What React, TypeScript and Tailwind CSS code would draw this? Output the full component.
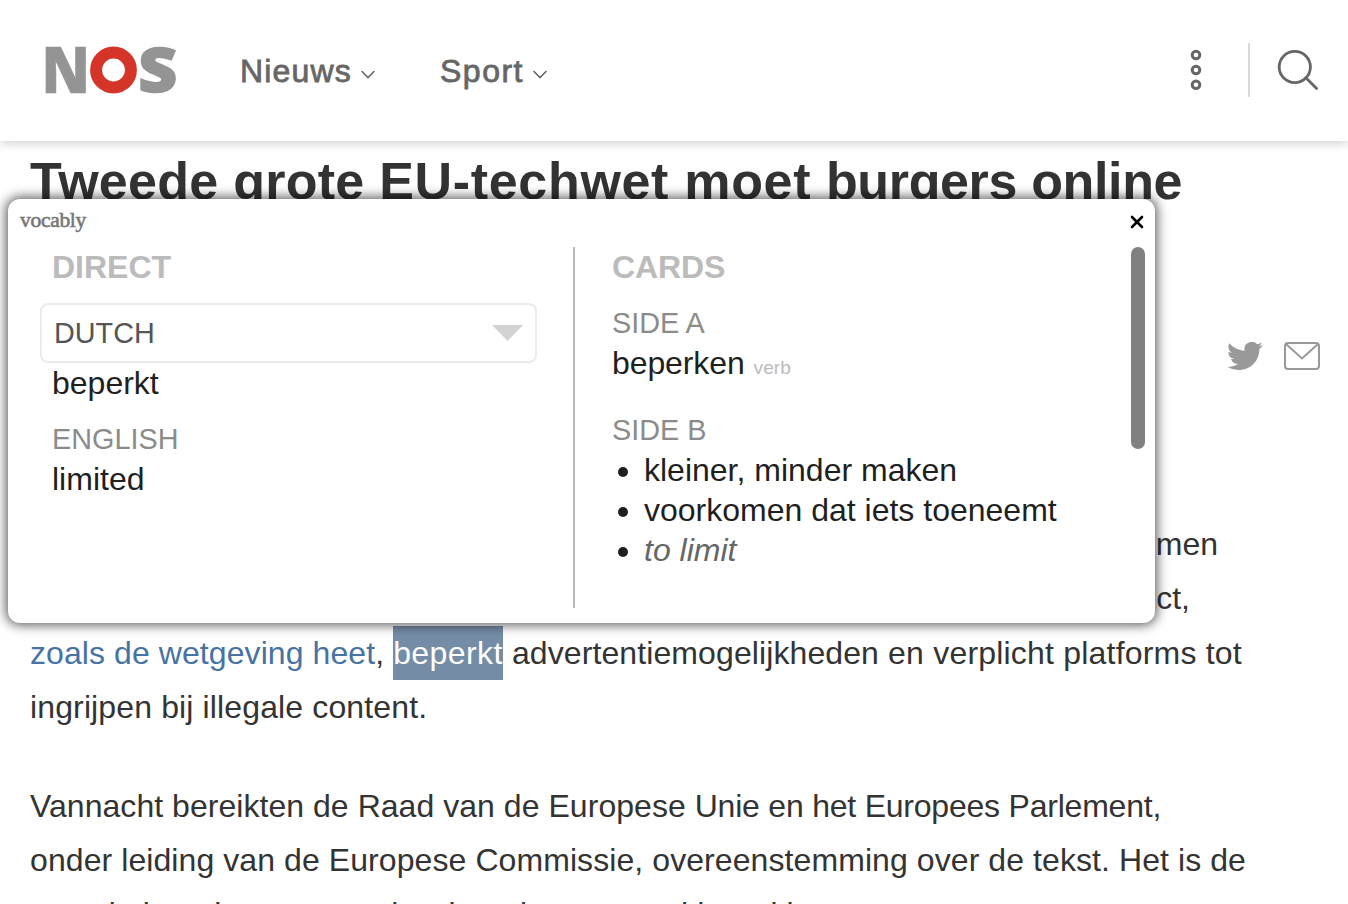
import type { ReactNode } from "react";

function Chevron() {
  return (
    <svg viewBox="0 0 14 10" className="h-[10px] w-[14px] fill-none stroke-[#666] stroke-[1.6]">
      <path d="M1 1.5 L7 7.5 L13 1.5" strokeLinecap="round" />
    </svg>
  );
}

function Logo() {
  return (
    <svg viewBox="0 0 132 48" className="h-[48px] w-[132px] overflow-visible font-['Open_Sans']">
      <text x="-4.6" y="47" fontSize="64.4" fontWeight="800" fill="#949494" stroke="#949494" strokeWidth="0.6" textLength="48.5" lengthAdjust="spacingAndGlyphs">
        N
      </text>
      <text x="92.3" y="46.2" fontSize="62" fontWeight="800" fill="#949494" stroke="#949494" strokeWidth="1.6" textLength="39" lengthAdjust="spacingAndGlyphs">
        S
      </text>
      <circle cx="67.5" cy="24" r="17.4" fill="white" stroke="#d53529" strokeWidth="12" />
    </svg>
  );
}

function Header() {
  return (
    <header className="relative z-10 flex h-[141px] items-center bg-white pb-px pl-[46px] pr-[29px] shadow-[0_2px_10px_rgba(0,0,0,0.2)]">
      <Logo />
      <nav className="ml-[62px] flex items-center pt-[2px] text-[32px] font-medium text-[#666]">
        <a className="flex w-[200px] items-center gap-[9px]">
          <span className="tracking-[1.15px] [-webkit-text-stroke:0.8px_#666]">Nieuws</span>
          <span className="pt-[7px]"><Chevron /></span>
        </a>
        <a className="flex items-center gap-[9px]">
          <span className="tracking-[1.5px] [-webkit-text-stroke:0.8px_#666]">Sport</span>
          <span className="pt-[7px]"><Chevron /></span>
        </a>
      </nav>
      <div className="ml-auto flex items-center">
        <svg viewBox="0 0 12 42" className="h-[42px] w-[12px] fill-none stroke-[#666] stroke-[3]">
          <circle cx="6" cy="6" r="3.8" />
          <circle cx="6" cy="21" r="3.8" />
          <circle cx="6" cy="35.7" r="3.8" />
        </svg>
        <div className="ml-[46px] h-[54px] w-[2px] bg-[#d9d9d9]" />
        <svg viewBox="0 0 42 42" className="ml-[27px] h-[42px] w-[42px] fill-none stroke-[#666] stroke-[2.8]">
          <circle cx="17.8" cy="18" r="15.6" />
          <path d="M28.8 28.8 L39.6 39.6" strokeLinecap="round" />
        </svg>
      </div>
    </header>
  );
}

function Line({ children, className = "" }: { children: ReactNode; className?: string }) {
  return <span className={`block h-[54.4px] whitespace-nowrap ${className}`}>{children}</span>;
}

function Entry({ label, children }: { label: string; children: ReactNode }) {
  return (
    <div className="text-[32px] leading-[40px] text-[#1f1f1f]">
      <div className="mb-[2px] text-[28.8px] leading-[36px] text-[#8b8b8b]">{label}</div>
      {children}
    </div>
  );
}

function Popup() {
  return (
    <section className="absolute left-[8px] top-[199px] z-20 flex h-[424px] w-[1147px] flex-col rounded-[12px] bg-white shadow-[0_0_12px_2px_rgba(0,0,0,0.65)]">
      <div className="flex h-[48px] shrink-0 items-center justify-between pl-[12px] pr-[11px]">
        <span className="-mt-[5px] font-['Liberation_Serif',serif] text-[21.5px] tracking-[-0.3px] text-[#777] [-webkit-text-stroke:0.6px_#777]">vocably</span>
        <svg viewBox="0 0 14 14" className="-mt-[2px] h-[14px] w-[14px] stroke-black stroke-[2.6]">
          <path d="M2 2 L12 12 M12 2 L2 12" strokeLinecap="round" />
        </svg>
      </div>
      <div className="flex h-[361px]">
        <div className="w-[567px] border-r-2 border-[#b9b9b9] pl-[44px]">
          <h2 className="text-[32px] font-bold leading-[40px] text-[#bbb]">DIRECT</h2>
          <div className="-ml-[12px] mt-[16px] flex h-[60px] w-[497px] items-center justify-between rounded-[8px] border-2 border-[#ebebeb] pl-[12px] pr-[12px]">
            <span className="text-[28.8px] leading-[36px] text-[#555]">DUTCH</span>
            <svg viewBox="0 0 31 16" className="h-[16px] w-[31px] fill-[#d2d2d2]">
              <path d="M0 0 H31 L15.5 16 Z" />
            </svg>
          </div>
          <div className="text-[32px] leading-[40px] text-[#1f1f1f]">beperkt</div>
          <div className="mt-[18px]">
            <Entry label="ENGLISH">limited</Entry>
          </div>
        </div>
        <div className="flex flex-1 justify-between pl-[37px] pr-[10px]">
          <div>
            <h2 className="mb-[18px] text-[32px] font-bold leading-[40px] tracking-[-0.1px] text-[#bbb]">CARDS</h2>
            <Entry label="SIDE A">
              <span className="tracking-[-0.1px]">beperken</span> <span className="text-[19.2px] text-[#bbb]">verb</span>
            </Entry>
            <div className="mt-[24px]">
              <Entry label="SIDE B">
                <ul className="list-disc pl-[32px]">
                  <li>kleiner, minder maken</li>
                  <li>voorkomen dat iets toeneemt</li>
                  <li><i className="text-[#666]">to limit</i></li>
                </ul>
              </Entry>
            </div>
          </div>
          <div className="h-[202px] w-[14px] rounded-full bg-[#808080]" />
        </div>
      </div>
    </section>
  );
}

export default function App() {
  return (
    <div className="relative h-[904px] w-[1348px] overflow-hidden bg-white font-['Liberation_Sans',Arial,sans-serif]">
      <Header />
      <main className="pl-[30px] text-[#333]">
        <h1 className="h-[196px] whitespace-nowrap pt-[10px] text-[52px] font-bold leading-[60px] tracking-[0.26px]">
          Tweede grote <span className="tracking-[0.68px]">EU-techwet moet</span>{" "}
          <span className="tracking-[-0.35px]">burgers online</span>
        </h1>
        <div className="flex h-[180px] items-start justify-end gap-[21px] pr-[28px] pt-[5px]">
          <svg viewBox="0 0 24 19.5" className="h-[28px] w-[36px] fill-[#999]" preserveAspectRatio="none">
            <path d="M23.95 2.31a10 10 0 0 1-2.82.78 4.96 4.96 0 0 0 2.16-2.73c-.95.56-2 .96-3.13 1.19a4.92 4.92 0 0 0-8.38 4.48C7.69 5.83 4.07 3.87 1.64.9a4.92 4.92 0 0 0 1.52 6.57 4.9 4.9 0 0 1-2.23-.62v.06a4.92 4.92 0 0 0 3.95 4.83 5 5 0 0 1-2.21.08 4.94 4.94 0 0 0 4.6 3.42A9.87 9.87 0 0 1 0 17.28a13.99 13.99 0 0 0 7.56 2.21c9.05 0 14-7.5 14-13.98 0-.21 0-.42-.02-.63a9.94 9.94 0 0 0 2.46-2.55z" />
          </svg>
          <svg viewBox="0 0 36 28" className="h-[28px] w-[36px] fill-none stroke-[#999] stroke-2">
            <rect x="1" y="1" width="34" height="26" rx="3" />
            <path d="M2 2 L18 16.5 L34 2" />
          </svg>
        </div>
        <p className="text-[32px] leading-[54.4px]">
          <Line className="w-[1188px] text-right">nemen</Line>
          <Line className="w-[1160px] text-right"><span className="tracking-[3px]">A</span>ct,</Line>
          <Line className="tracking-[0.2px]">
            <span className="tracking-[0.08px]"><a className="text-[#4673a3]">zoals de wetgeving heet</a>, </span>
            <mark className="inline-block h-[54px] bg-[#758ca6] tracking-[0.42px] text-white">beperkt</mark>{" "}
            <span className="tracking-[0.1px]">advertentiemogelijkheden</span> en verplicht platforms tot
          </Line>
          <Line className="tracking-[0.13px]">ingrijpen bij illegale content.</Line>
        </p>
        <p className="mt-[44px] text-[32px] leading-[54.4px]">
          <Line className="tracking-[-0.075px]">
            <span className="tracking-[0.04px]">Vannacht bereikten de Raad van de Europese </span>
            <span className="tracking-[-0.22px]">Unie en het Europees Parlement,</span>
          </Line>
          <Line className="tracking-[0.08px]">onder leiding van de Europese Commissie, overeenstemming over de tekst. Het is de</Line>
          <Line className="tracking-[0.08px]">tweede keer in een aantal weken dat er een akkoord is over een grote wet voor</Line>
        </p>
      </main>
      <Popup />
    </div>
  );
}
